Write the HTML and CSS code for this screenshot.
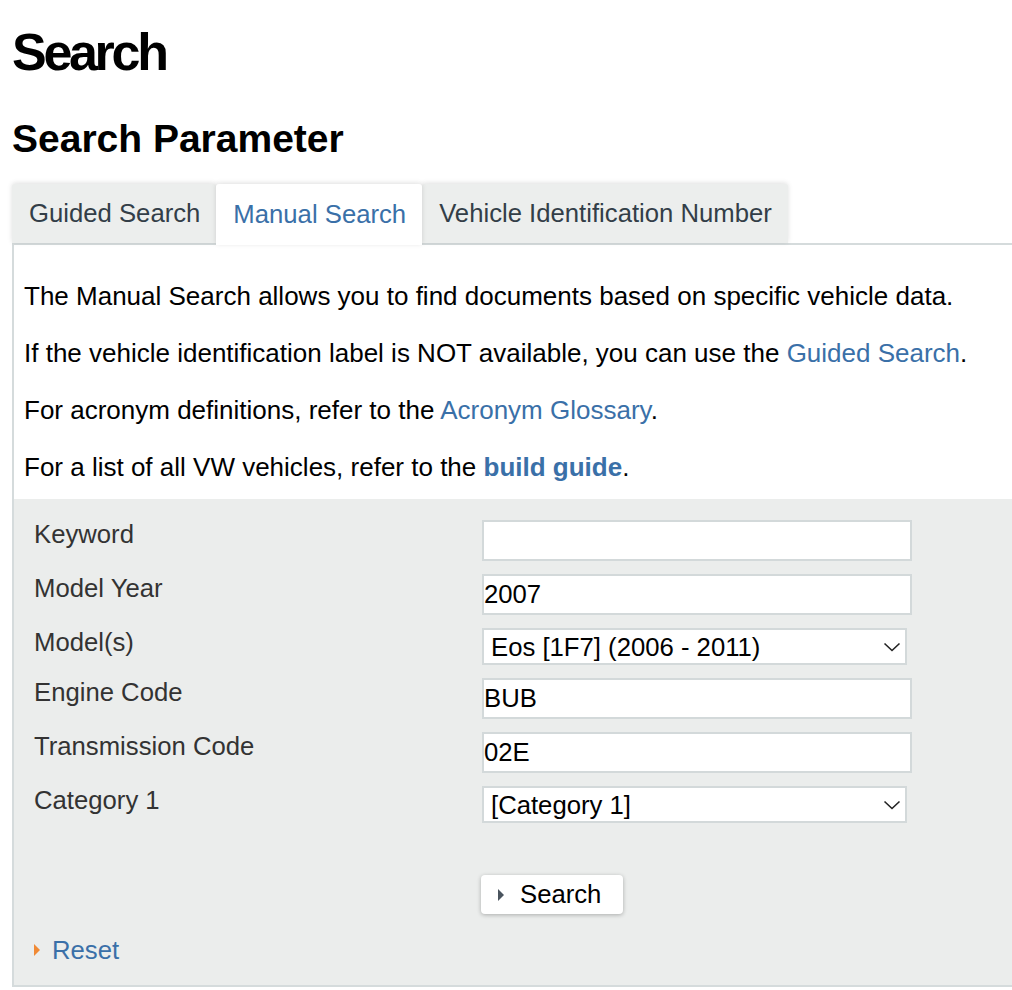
FILE: index.html
```html
<!DOCTYPE html>
<html lang="en">
<head>
<meta charset="utf-8">
<title>Search</title>
<link rel="stylesheet" href="styles.css">
</head>
<body>
<h1 class="page-title">Search</h1>
<h2 class="section-title">Search Parameter</h2>
<div class="tabs">
  <div class="tab">Guided Search</div>
  <div class="tab active">Manual Search</div>
  <div class="tab">Vehicle Identification Number</div>
</div>
<div class="panel">
  <div class="intro">
    <p>The Manual Search allows you to find documents based on specific vehicle data.</p>
    <p>If the vehicle identification label is NOT available, you can use the <a class="link" href="#">Guided Search</a>.</p>
    <p>For acronym definitions, refer to the <a class="link" href="#">Acronym Glossary</a>.</p>
    <p>For a list of all VW vehicles, refer to the <a class="link strong" href="#">build guide</a>.</p>
  </div>
  <form class="form">
    <div class="row">
      <label class="label">Keyword</label>
      <input class="field" type="text" value="">
    </div>
    <div class="row">
      <label class="label">Model Year</label>
      <input class="field" type="text" value="2007">
    </div>
    <div class="row">
      <label class="label">Model(s)</label>
      <div class="select-wrap">
        <select class="field select"><option>Eos [1F7] (2006 - 2011)</option></select>
        <svg class="chev" width="18" height="10" viewBox="0 0 18 10"><polyline points="1.5,1.5 9,8.5 16.5,1.5" fill="none" stroke="#222" stroke-width="1.6"/></svg>
      </div>
    </div>
    <div class="row">
      <label class="label">Engine Code</label>
      <input class="field" type="text" value="BUB">
    </div>
    <div class="row">
      <label class="label">Transmission Code</label>
      <input class="field" type="text" value="02E">
    </div>
    <div class="row">
      <label class="label">Category 1</label>
      <div class="select-wrap">
        <select class="field select"><option>[Category 1]</option></select>
        <svg class="chev" width="18" height="10" viewBox="0 0 18 10"><polyline points="1.5,1.5 9,8.5 16.5,1.5" fill="none" stroke="#222" stroke-width="1.6"/></svg>
      </div>
    </div>
    <div class="actions">
      <button class="btn" type="button"><span class="tri tri-dark"></span>Search</button>
    </div>
    <a class="reset" href="#"><span class="tri tri-orange"></span>Reset</a>
  </form>
</div>
</body>
</html>
```

FILE: styles.css
```css
html, body {
  margin: 0;
  padding: 0;
  background: #fff;
}
body {
  padding-left: 12px;
  font-family: "Liberation Sans", Arial, Helvetica, sans-serif;
  color: #000;
  overflow: hidden;
}
.page-title {
  margin: 22px 0 0 0;
  font-size: 52px;
  line-height: 60px;
  font-weight: 700;
  letter-spacing: -3.3px;
}
.section-title {
  margin: 35px 0 23px 0;
  font-size: 39px;
  line-height: 44px;
  font-weight: 700;
}
.tabs {
  display: flex;
  border-bottom: 2px solid #d5dbdc;
  height: 59px;
}
.tab {
  position: relative;
  height: 59px;
  padding: 0 16px 0 17px;
  display: flex;
  align-items: center;
  font-size: 25.7px;
  color: #333e48;
  background: #eceeed;
  border-radius: 3px 3px 0 0;
  box-shadow: 0 -1px 5px rgba(0, 0, 0, 0.13);
}
.tab.active {
  background: #fff;
  color: #3a70a8;
  height: 61px;
  margin-bottom: -2px;
  z-index: 2;
}
.panel {
  border-left: 2px solid #d5dbdc;
  border-bottom: 2px solid #d5dbdc;
}
.intro {
  padding: 35px 0 15px 10px;
}
.intro p {
  margin: 0 0 24px 0;
  font-size: 26px;
  line-height: 33px;
}
.intro p:last-child {
  margin-bottom: 0;
}
.link {
  color: #3a70a8;
  text-decoration: none;
}
.link.strong {
  font-weight: 700;
}
.form {
  background: #ebedec;
  padding: 21px 0 20px 20px;
  margin: 0;
}
.row {
  display: flex;
  align-items: flex-start;
  margin-bottom: 13px;
}
.label {
  width: 448px;
  flex: none;
  font-size: 25.7px;
  color: #333;
}
.field {
  box-sizing: border-box;
  width: 430px;
  height: 41px;
  margin: 0;
  border: 2px solid #d3d9da;
  border-radius: 0;
  background: #fff;
  padding: 0;
  font-family: "Liberation Sans", Arial, Helvetica, sans-serif;
  font-size: 25.7px;
  color: #000;
  outline: none;
}
.select-wrap {
  position: relative;
  width: 425px;
  height: 37px;
}
.select {
  width: 425px;
  height: 37px;
  padding: 0 40px 0 7px;
  -webkit-appearance: none;
  appearance: none;
}
.chev {
  position: absolute;
  right: 6px;
  top: 14px;
  pointer-events: none;
}
.actions {
  padding-left: 447px;
  margin-top: 52px;
}
.btn {
  display: flex;
  align-items: center;
  box-sizing: border-box;
  width: 142px;
  height: 39px;
  padding: 0 0 0 17px;
  border: none;
  border-radius: 4px;
  background: #fff;
  box-shadow: 0 1px 4px rgba(0, 0, 0, 0.28);
  font-family: "Liberation Sans", Arial, Helvetica, sans-serif;
  font-size: 25.7px;
  color: #000;
}
.tri {
  display: inline-block;
  width: 0;
  height: 0;
  border-top: 6px solid transparent;
  border-bottom: 6px solid transparent;
  border-left: 6px solid #4a545e;
}
.tri-dark {
  margin-right: 16px;
}
.tri-orange {
  border-left-color: #f08a35;
  margin-right: 12px;
}
.reset {
  display: flex;
  align-items: center;
  margin-top: 21px;
  height: 30px;
  font-size: 25.7px;
  color: #3a70a8;
  text-decoration: none;
  width: max-content;
}
```
